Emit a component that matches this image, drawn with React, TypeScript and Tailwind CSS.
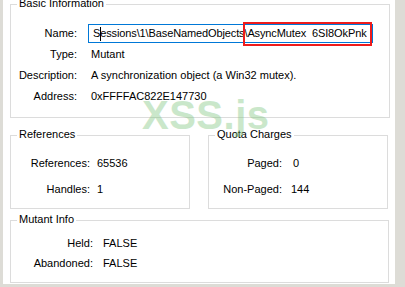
import React from 'react';

const font = { fontFamily: '"Liberation Sans", Arial, sans-serif' };

function GroupBox({
  title,
  className,
  children,
}: {
  title: string;
  className?: string;
  children?: React.ReactNode;
}) {
  return (
    <div className={`relative border border-[#dcdcdc] ${className ?? ''}`}>
      <span className="absolute top-[-8px] left-[6px] bg-white px-[2px] leading-[13px] text-black">
        {title}
      </span>
      {children}
    </div>
  );
}

function Row({
  label,
  value,
  labelWidth,
  gap,
  height,
}: {
  label: string;
  value: React.ReactNode;
  labelWidth: number;
  gap: number;
  height: number;
}) {
  return (
    <div className="flex items-center" style={{ height }}>
      <span className="text-right shrink-0" style={{ width: labelWidth }}>
        {label}
      </span>
      <span style={{ marginLeft: gap }}>{value}</span>
    </div>
  );
}

export default function App() {
  return (
    <div
      className="w-[405px] h-[287px] bg-[#dddcd6] pl-[3px] pr-[10px] pb-[3px] text-[11px] text-black overflow-hidden"
      style={font}
    >
      <div className="relative h-full bg-white pt-[4px] pl-[7px]">
        {/* Basic Information */}
        <GroupBox title="Basic Information" className="w-[380px] h-[114px]">
          <div className="pt-[18px]">
            <div className="flex items-center h-[21px]">
              <span className="w-[66px] text-right shrink-0">Name:</span>
              <div className="relative ml-[11px] w-[285px] h-[19px] border border-[#0078d7] flex items-center pl-[4px] whitespace-pre">
                <span className="overflow-hidden tracking-[-0.12px]">Sessions\1\BaseNamedObjects\AsyncMutex  6SI8OkPnk</span>
                <span className="absolute left-[11px] top-[2px] w-px h-[14px] bg-black" />
                <span className="absolute left-[154px] top-[-3px] w-[129px] h-[24px] border-2 border-[#ee1c1c]" />
              </div>
            </div>
            <Row label="Type:" value="Mutant" labelWidth={66} gap={14} height={21} />
            <Row
              label="Description:"
              value="A synchronization object (a Win32 mutex)."
              labelWidth={66}
              gap={14}
              height={21}
            />
            <Row label="Address:" value="0xFFFFAC822E147730" labelWidth={66} gap={14} height={21} />
          </div>
        </GroupBox>

        {/* References / Quota */}
        <div className="flex mt-[17px]">
          <GroupBox title="References" className="w-[180px] h-[74px]">
            <div className="pt-[14px]">
              <Row label="References:" value="65536" labelWidth={79} gap={7} height={26} />
              <Row label="Handles:" value="1" labelWidth={79} gap={7} height={26} />
            </div>
          </GroupBox>
          <GroupBox title="Quota Charges" className="ml-[18px] w-[180px] h-[74px]">
            <div className="pt-[14px]">
              <Row label="Paged:" value="0" labelWidth={73} gap={11} height={26} />
              <Row label="Non-Paged:" value="144" labelWidth={73} gap={9} height={26} />
            </div>
          </GroupBox>
        </div>

        {/* Mutant Info */}
        <GroupBox title="Mutant Info" className="mt-[11px] w-[379px] h-[63px]">
          <div className="pt-[12px]">
            <Row label="Held:" value="FALSE" labelWidth={82} gap={10} height={20} />
            <Row label="Abandoned:" value="FALSE" labelWidth={82} gap={10} height={20} />
          </div>
        </GroupBox>

        {/* watermark */}
        <span className="absolute left-[139px] top-[95px] text-[40px] font-bold leading-none tracking-[0.5px] text-[#7cc47c] opacity-40 pointer-events-none">
          XSS.js
        </span>
      </div>
    </div>
  );
}
